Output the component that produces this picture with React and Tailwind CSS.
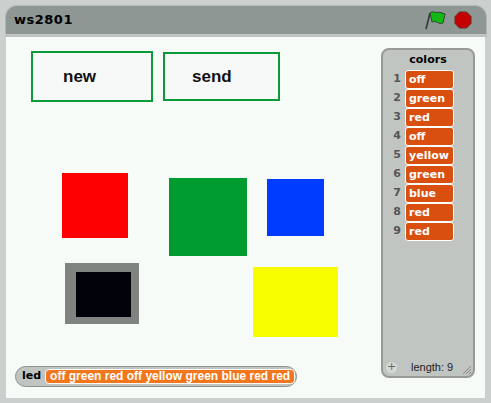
import React from 'react'

const items = ['off', 'green', 'red', 'off', 'yellow', 'green', 'blue', 'red', 'red']

const Flag = () => (
  <svg width="24" height="20" viewBox="0 0 24 20">
    <path d="M2 19 L6 3" stroke="#333" strokeWidth="1.5" fill="none" />
    <path d="M6 3 C9 0 12 4 15 2 L21 4 L19 13 C15 15 12 10 8 12 Z" fill="#13b813" stroke="#2e4a2e" strokeWidth="1" strokeLinejoin="round" />
  </svg>
)

const Stop = () => (
  <svg width="18" height="18" viewBox="0 0 18 18">
    <polygon points="5.5,1 12.5,1 17,5.5 17,12.5 12.5,17 5.5,17 1,12.5 1,5.5" fill="#c40000" stroke="#6b2a2a" strokeWidth="1" />
  </svg>
)

const ListMonitor = () => (
  <div className="absolute left-[375px] top-[11px] w-[94px] h-[330px] rounded-[8px] border-2 border-[#979a98] bg-[#c1c5c1] flex flex-col">
    <div className="text-center text-[11px] font-bold text-black leading-none pt-[4px] pb-[5px]">colors</div>
    <div className="flex flex-col">
      {items.map((it, i) => (
        <div key={i} className="flex items-center h-[19px]">
          <span className="w-[22px] pr-[4px] text-right text-[11px] font-bold text-[#555]">{i + 1}</span>
          <div className="w-[49px] h-[19px] rounded-[3px] border border-white bg-[#d84f10] text-white text-[11px] font-bold leading-[17px] pl-[3px]">
            {it}
          </div>
        </div>
      ))}
    </div>
    <div className="mt-auto flex items-center h-[16px] pb-[2px] px-[3px] relative">
      <span className="w-[11px] h-[11px] rounded-full bg-[#d6d9d6] text-[#666] text-[11px] leading-[10px] text-center">+</span>
      <span className="ml-[14px] text-[11px] text-[#222]" style={{ fontFamily: '"Liberation Sans", Arial, sans-serif' }}>length: 9</span>
      <svg className="absolute right-[1px] bottom-[1px]" width="10" height="10" viewBox="0 0 10 10">
        <path d="M1 9 L9 1 M4 9 L9 4 M7 9 L9 7" stroke="#888" strokeWidth="1" />
      </svg>
    </div>
  </div>
)

export default function App() {
  return (
    <div className="w-[491px] h-[403px] bg-[#cbcfce] relative overflow-hidden" style={{ fontFamily: '"DejaVu Sans", Verdana, sans-serif' }}>
      {/* title bar */}
      <div className="absolute left-[5px] top-[5px] w-[482px] h-[29px] rounded-t-[12px] bg-[#8e9794] border border-[#b4b9b7] border-b-0 flex items-center px-[8px]">
        <span className="text-[13px] font-bold text-black tracking-[0.5px]">ws2801</span>
        <div className="ml-auto flex items-center gap-[6px] pr-[6px]">
          <Flag />
          <Stop />
        </div>
      </div>
      <div className="absolute left-[5px] top-[34px] w-[482px] h-[3px] bg-[#bfc4c2]" />
      {/* stage */}
      <div className="absolute left-[6px] top-[37px] w-[479px] h-[361px] bg-[#f6fbf8] overflow-hidden">
        <div className="absolute left-[25px] top-[14px] w-[122px] h-[51px] border-2 border-[#0b9a3a] bg-[#f7f8f8] flex items-center pl-[30px]">
          <span className="text-[17px] font-bold text-[#111]" style={{ fontFamily: '"Liberation Sans", Arial, sans-serif' }}>new</span>
        </div>
        <div className="absolute left-[157px] top-[15px] w-[117px] h-[49px] border-2 border-[#0b9a3a] bg-[#f7f8f8] flex items-center pl-[27px]">
          <span className="text-[17px] font-bold text-[#111]" style={{ fontFamily: '"Liberation Sans", Arial, sans-serif' }}>send</span>
        </div>
        <div className="absolute left-[56px] top-[136px] w-[66px] h-[65px] bg-[#fe0000]" />
        <div className="absolute left-[163px] top-[141px] w-[78px] h-[78px] bg-[#009c30]" />
        <div className="absolute left-[261px] top-[142px] w-[57px] h-[57px] bg-[#003cff]" />
        <div className="absolute left-[59px] top-[226px] w-[74px] h-[61px] bg-[#7f8480] pl-[11px] pt-[9px]">
          <div className="w-[55px] h-[45px] bg-[#02020a]" />
        </div>
        <div className="absolute left-[247px] top-[230px] w-[85px] h-[70px] bg-[#f8fd00]" />
        <ListMonitor />
        <div className="absolute left-[9px] top-[329px] w-[282px] h-[21px] rounded-full border border-[#8d918f] bg-[#c1c5c1] flex items-center pl-[6px] pr-[4px]">
          <span className="text-[11px] font-bold text-black mr-[4px]">led</span>
          <div className="flex-1 h-[15px] rounded-[4px] border border-white bg-[#f2761b] text-white text-[12px] font-bold leading-[13px] px-[4px] whitespace-nowrap" style={{ fontFamily: '"Liberation Sans", Arial, sans-serif' }}>
            off green red off yellow green blue red red
          </div>
        </div>
      </div>
    </div>
  )
}
